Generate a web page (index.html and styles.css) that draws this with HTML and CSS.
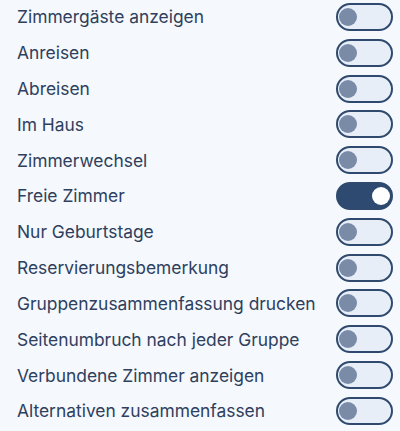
FILE: index.html
```html
<!DOCTYPE html>
<html lang="de">
<head>
  <meta charset="UTF-8">
  <meta name="viewport" content="width=device-width, initial-scale=1.0">
  <title>Optionen</title>
  <link rel="stylesheet" href="styles.css">
</head>
<body>
  <div class="options">
    <label class="option"><span class="label">Zimmergäste anzeigen</span><input type="checkbox"><span class="switch"></span></label>
    <label class="option"><span class="label">Anreisen</span><input type="checkbox"><span class="switch"></span></label>
    <label class="option"><span class="label">Abreisen</span><input type="checkbox"><span class="switch"></span></label>
    <label class="option"><span class="label">Im Haus</span><input type="checkbox"><span class="switch"></span></label>
    <label class="option"><span class="label">Zimmerwechsel</span><input type="checkbox"><span class="switch"></span></label>
    <label class="option"><span class="label">Freie Zimmer</span><input type="checkbox" checked><span class="switch"></span></label>
    <label class="option"><span class="label">Nur Geburtstage</span><input type="checkbox"><span class="switch"></span></label>
    <label class="option"><span class="label">Reservierungsbemerkung</span><input type="checkbox"><span class="switch"></span></label>
    <label class="option"><span class="label">Gruppenzusammenfassung drucken</span><input type="checkbox"><span class="switch"></span></label>
    <label class="option"><span class="label">Seitenumbruch nach jeder Gruppe</span><input type="checkbox"><span class="switch"></span></label>
    <label class="option"><span class="label">Verbundene Zimmer anzeigen</span><input type="checkbox"><span class="switch"></span></label>
    <label class="option"><span class="label">Alternativen zusammenfassen</span><input type="checkbox"><span class="switch"></span></label>
  </div>
</body>
</html>
```

FILE: styles.css
```css
body {
  margin: 0;
  background-color: #f5f8fc;
  font-family: Inter, 'Noto Sans', Arial, sans-serif;
  color: #2e405e;
}
.options {
  padding: 3px 7px 0 17px;
  display: flex;
  flex-direction: column;
}
.option {
  display: flex;
  align-items: center;
  justify-content: space-between;
  height: 35.82px;
  cursor: pointer;
}
.option:first-child {
  margin-top: -4px;
}
.label {
  font-size: 17.4px;
}
.option input {
  display: none;
}
.switch {
  position: relative;
  width: 53px;
  height: 24px;
  border: 2px solid #2f4a6e;
  border-radius: 14px;
  background-color: #e8eef8;
}
.switch::after {
  content: '';
  position: absolute;
  top: 3px;
  left: 1px;
  width: 18px;
  height: 18px;
  border-radius: 50%;
  background-color: #7a8ba8;
}
.option input:checked + .switch {
  background-color: #2f4a70;
}
.option input:checked + .switch::after {
  left: auto;
  right: 1px;
  background-color: #fff;
}
```
